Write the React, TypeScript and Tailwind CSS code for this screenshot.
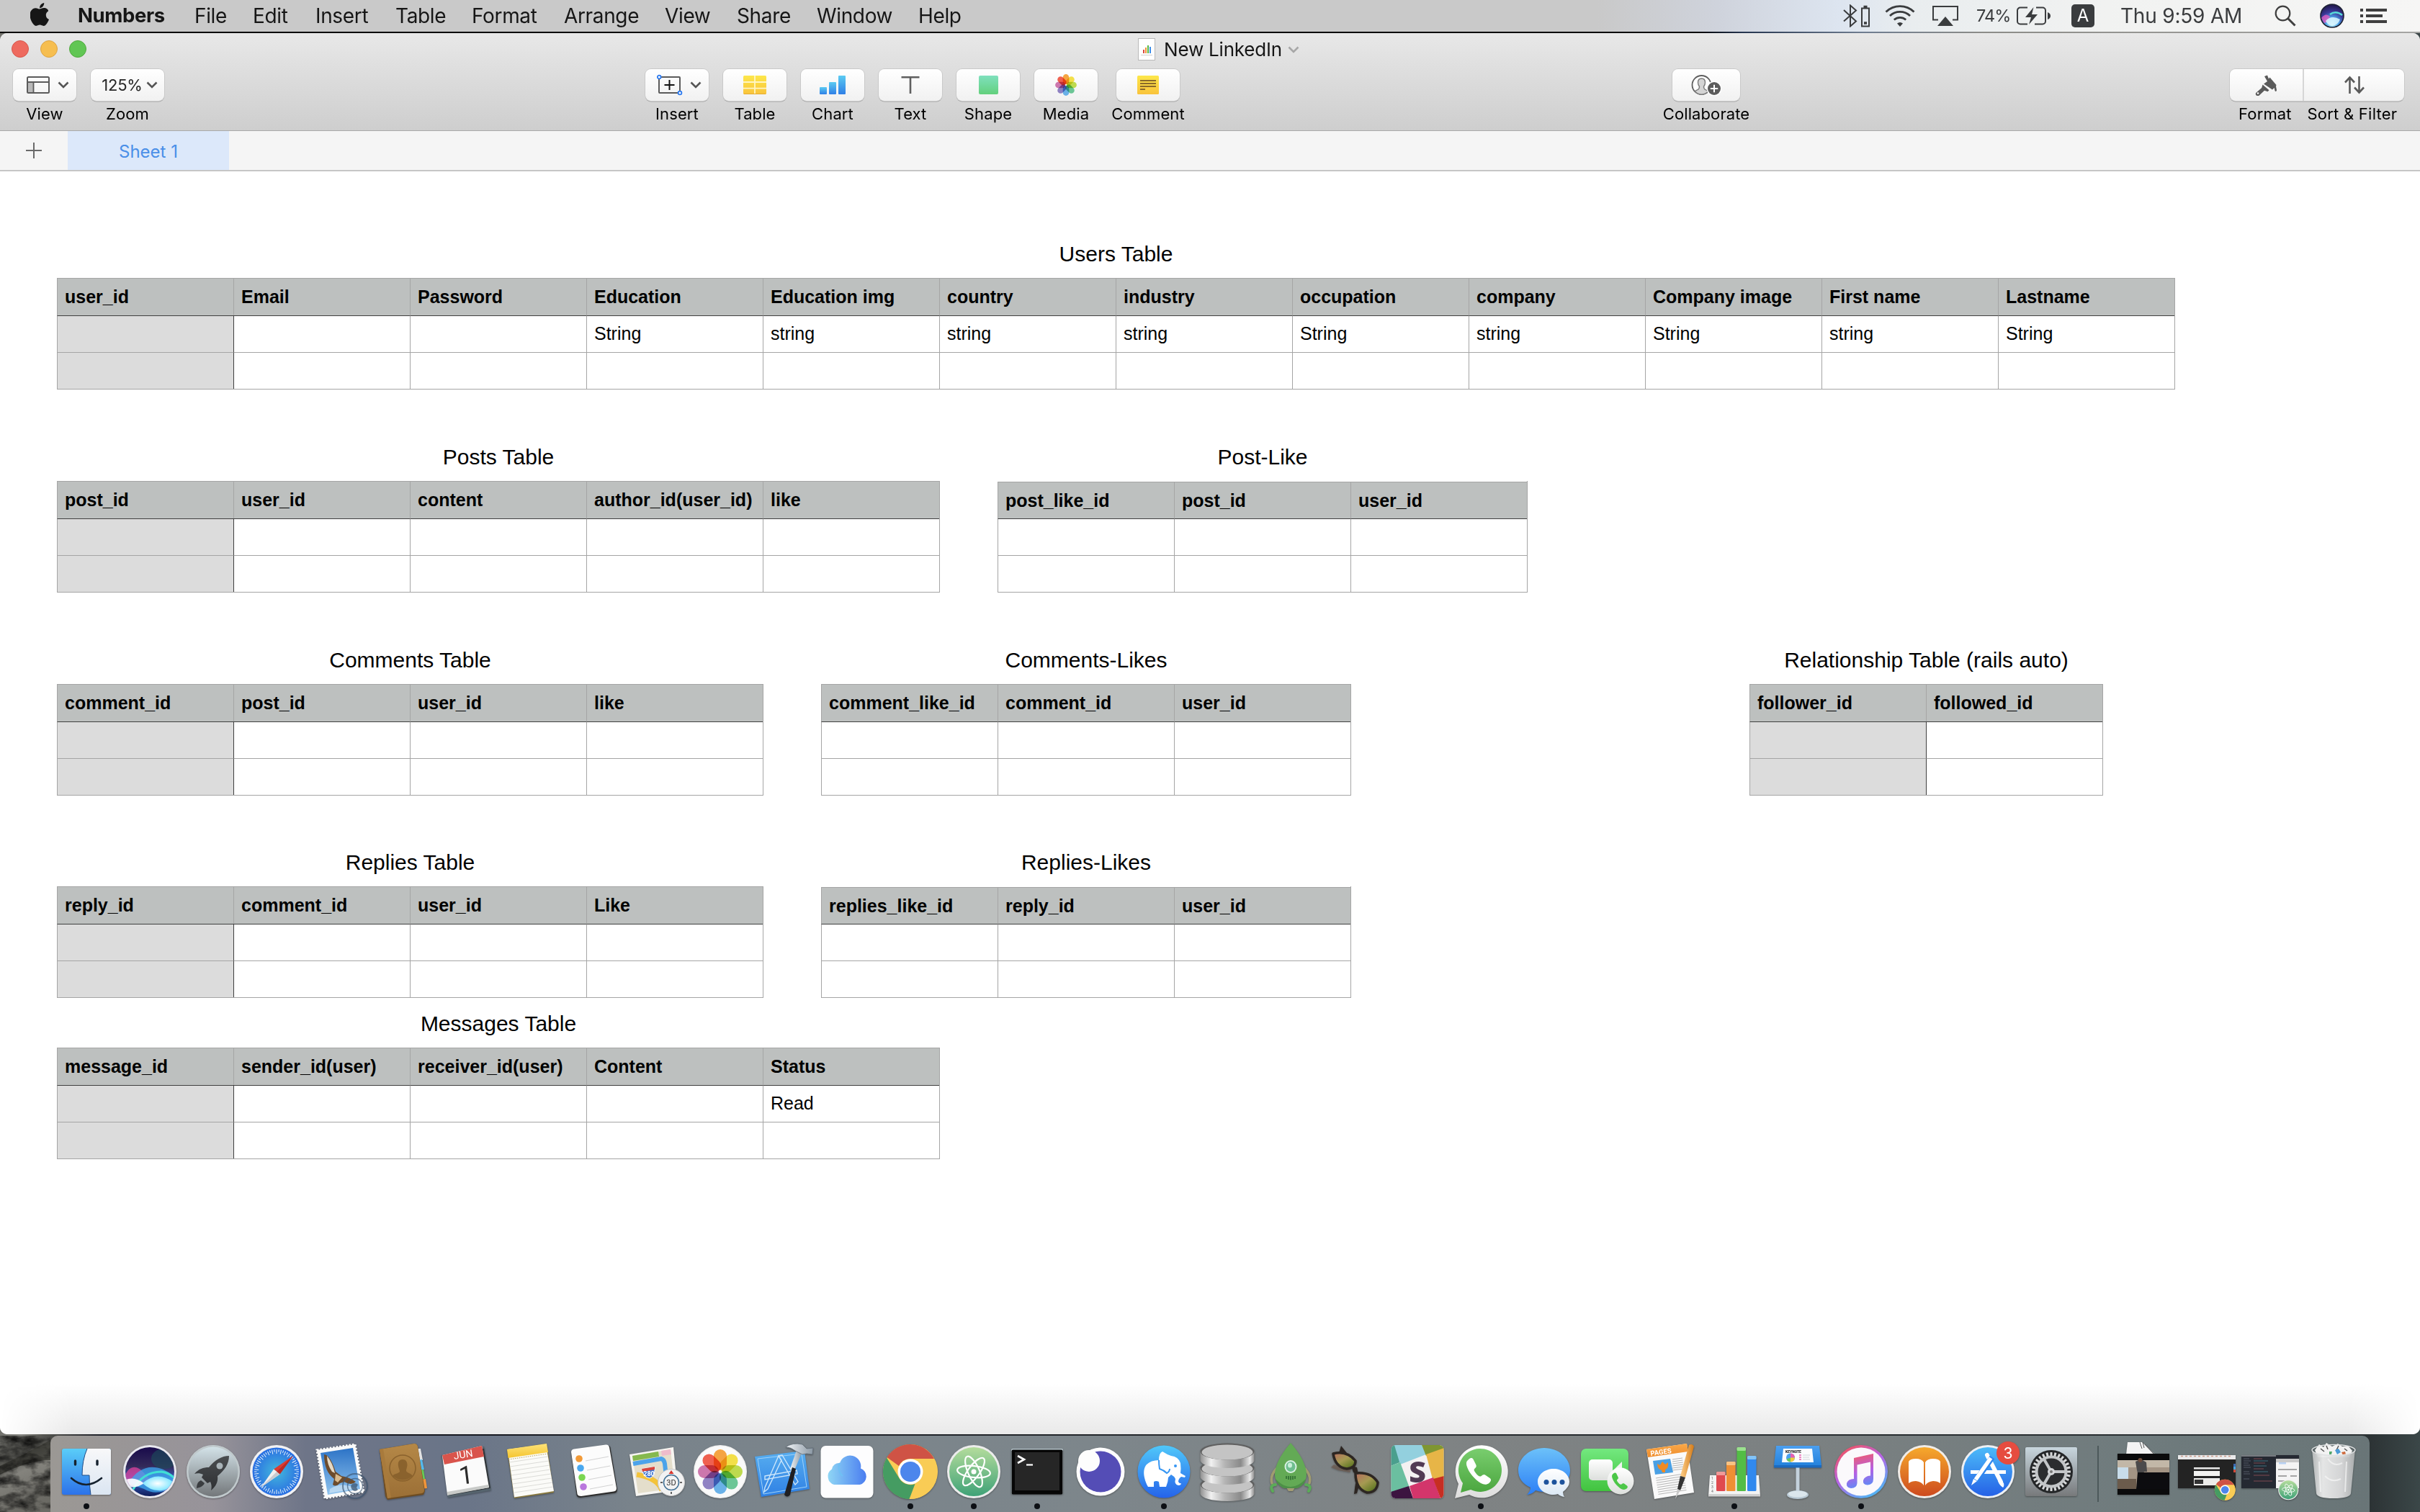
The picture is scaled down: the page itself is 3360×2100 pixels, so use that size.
import React from "react";

const menuItems = ["File", "Edit", "Insert", "Table", "Format", "Arrange", "View", "Share", "Window", "Help"];

type TableSpec = {
  title: string;
  columns: string[];
  firstRow?: Record<number, string>;
  headerColumn?: boolean;
  className?: string;
};

function SheetTable({ title, columns, firstRow = {}, headerColumn = true, className = "" }: TableSpec) {
  const rows = [0, 1];
  return (
    <section className={`flex flex-col items-center ${className}`}>
      <h2 className="mb-[16px] h-[34px] text-[30px] leading-[34px] whitespace-nowrap">{title}</h2>
      <div className="flex flex-col border-r border-b border-[#a5a5a5]">
        <div className="flex h-[52px] group-[.compact]:mt-px group-[.compact]:h-[51px]">
          {columns.map((c, i) => (
            <div
              key={i}
              className="h-full w-[245px] border-t border-l border-[#a5a5a5] bg-[#bdc0bf] pl-[10px] text-[25px] leading-[50px] font-bold whitespace-nowrap"
            >
              {c}
            </div>
          ))}
        </div>
        {rows.map((r) => (
          <div key={r} className="flex h-[51px]">
            {columns.map((_, i) => (
              <div
                key={i}
                className={[
                  "h-[51px] w-[245px] border-t border-l pl-[10px] text-[25px] leading-[49px] whitespace-nowrap",
                  r === 0 ? "border-t-[#3f3f3f]" : "border-t-[#a5a5a5]",
                  headerColumn && i === 1 ? "border-l-[#3f3f3f]" : "border-l-[#a5a5a5]",
                  headerColumn && i === 0 ? "bg-[#dcdcdc]" : "bg-white",
                ].join(" ")}
              >
                {r === 0 ? firstRow[i] : null}
              </div>
            ))}
          </div>
        ))}
      </div>
    </section>
  );
}

function Chevron({ color = "#555", className = "" }: { color?: string; className?: string }) {
  return (
    <svg width="16" height="10" viewBox="0 0 16 10" className={className}>
      <path d="M1.5 1.5 L8 8 L14.5 1.5" fill="none" stroke={color} strokeWidth="2.6" />
    </svg>
  );
}

const petals: [number, string][] = [
  [0, "#f49a2c"],
  [45, "#f2dc35"],
  [90, "#b7d63a"],
  [135, "#5cc08b"],
  [180, "#5aa9e6"],
  [225, "#8374bd"],
  [270, "#c768a4"],
  [315, "#ee4e3c"],
];

function Flower({ scale = 1, cx, cy }: { scale?: number; cx: number; cy: number }) {
  return (
    <g transform={`translate(${cx} ${cy}) scale(${scale})`} style={{ isolation: "isolate" }}>
      {petals.map(([a, c]) => (
        <rect
          key={a}
          x="-9"
          y="-31"
          width="18"
          height="29"
          rx="9"
          fill={c}
          opacity="0.9"
          transform={`rotate(${a})`}
          className="mix-blend-multiply"
        />
      ))}
    </g>
  );
}

function ToolButton({
  label,
  width,
  className = "",
  children,
}: {
  label: string;
  width: string;
  className?: string;
  children: React.ReactNode;
}) {
  return (
    <div className={`flex flex-col items-center ${width} ${className}`}>
      <div
        className={`flex h-[44px] items-center justify-center rounded-[8px] bg-linear-to-b from-white to-[#f1f1f1] shadow-[0_0_0_1px_#c9c9c9,0_1.5px_0_0_#9d9d9d] ${width}`}
      >
        {children}
      </div>
      <span className="mt-[6px] text-[22px] leading-[24px] tracking-[0.1px] whitespace-nowrap text-black">{label}</span>
    </div>
  );
}

const yellowFill = (id: string) => (
  <linearGradient id={id} x1="0" y1="0" x2="0" y2="1">
    <stop offset="0" stopColor="#fde74a" />
    <stop offset="1" stopColor="#f9c33c" />
  </linearGradient>
);

function Toolbar() {
  return (
    <div className="flex h-[88px] items-start">
      <ToolButton label="View" width="w-[88px]" className="ml-[18px]">
        <svg width="32" height="24" viewBox="0 0 32 24" className="ml-[9px]">
          <rect x="1" y="1" width="30" height="22" rx="1.5" fill="none" stroke="#5b5b5b" strokeWidth="2" />
          <rect x="2" y="8" width="7" height="14" fill="#b9b9b9" />
          <path d="M1 8H31M9.5 8V23" stroke="#5b5b5b" strokeWidth="1.8" />
        </svg>
        <Chevron className="ml-[11px]" />
      </ToolButton>
      <ToolButton label="Zoom" width="w-[102px]" className="ml-[20px]">
        <span className="ml-[6px] text-[22px] tracking-[-0.2px] text-[#262626]">125%</span>
        <Chevron className="ml-[5px]" />
      </ToolButton>

      <ToolButton label="Insert" width="w-[88px]" className="ml-[668px]">
        <svg width="36" height="30" viewBox="0 0 36 30">
          <rect x="3" y="4" width="29" height="22" rx="1" fill="none" stroke="#5b5b5b" strokeWidth="2" />
          <path d="M17.5 8V22M10.5 15H24.5" stroke="#111" strokeWidth="2" />
          <circle cx="3.2" cy="4" r="2.4" fill="#fff" stroke="#2d7bf0" strokeWidth="1.8" />
          <circle cx="32" cy="26" r="2.4" fill="#fff" stroke="#2d7bf0" strokeWidth="1.8" />
        </svg>
        <Chevron className="mr-[-6px] ml-[10px]" />
      </ToolButton>
      <ToolButton label="Table" width="w-[88px]" className="ml-[20px]">
        <svg width="32" height="26" viewBox="0 0 32 26">
          <defs>{yellowFill("tbY")}</defs>
          <rect width="32" height="26" rx="1.5" fill="url(#tbY)" />
          <path d="M0 9H32M0 17.7H32M16 0V26" stroke="#fff6c4" strokeWidth="1.8" />
          <path d="M1 25.5H31" stroke="#e4ac30" strokeWidth="1" />
        </svg>
      </ToolButton>
      <ToolButton label="Chart" width="w-[88px]" className="ml-[20px]">
        <svg width="36" height="26" viewBox="0 0 36 26">
          <defs>
            <linearGradient id="tbB" x1="0" y1="0" x2="0" y2="1">
              <stop offset="0" stopColor="#5bcbf2" />
              <stop offset="1" stopColor="#2f7fe6" />
            </linearGradient>
          </defs>
          <rect x="0" y="16" width="10" height="10" rx="1" fill="url(#tbB)" />
          <rect x="13" y="9" width="10" height="17" rx="1" fill="url(#tbB)" />
          <rect x="26" y="0" width="10" height="26" rx="1" fill="url(#tbB)" />
        </svg>
      </ToolButton>
      <ToolButton label="Text" width="w-[88px]" className="ml-[20px]">
        <svg width="26" height="26" viewBox="0 0 26 26">
          <path d="M0.5 2.3H25.5M13 2V25" stroke="#5f5f5f" strokeWidth="2.6" fill="none" />
        </svg>
      </ToolButton>
      <ToolButton label="Shape" width="w-[88px]" className="ml-[20px]">
        <div className="h-[26px] w-[27px] rounded-[2px] bg-linear-to-b from-[#7fe0bd] to-[#63d07c]" />
      </ToolButton>
      <ToolButton label="Media" width="w-[88px]" className="ml-[20px]">
        <svg width="32" height="32" viewBox="0 0 32 32">
          <Flower cx={16} cy={16} scale={0.48} />
        </svg>
      </ToolButton>
      <ToolButton label="Comment" width="w-[88px]" className="ml-[26px]">
        <svg width="30" height="26" viewBox="0 0 30 26">
          <defs>{yellowFill("tbC")}</defs>
          <rect width="30" height="26" rx="1.5" fill="url(#tbC)" />
          <path d="M4 7H26M4 11H26M4 15H26M4 19H11" stroke="#8a6a2a" strokeWidth="2" />
        </svg>
      </ToolButton>

      <ToolButton label="Collaborate" width="w-[94px]" className="ml-[684px]">
        <svg width="42" height="30" viewBox="0 0 42 30">
          <circle cx="14.5" cy="15" r="13" fill="#fff" stroke="#5f5f5f" strokeWidth="1.8" />
          <path
            d="M14.5 6c-3.6 0-5 2.7-5 5.7 0 2.6 1 4.300 2 5.600 0 2.700-.3 3.400-2.500 4.300-2 .8-2.800 1.200-3.600 2.400a12 12 0 0 0 18.200 0c-.8-1.200-1.600-1.600-3.600-2.400-2.200-.9-2.500-1.600-2.500-4.300 1-1.300 2-3 2-5.600 0-3-1.400-5.700-5-5.700z"
            fill="#d4d4d4"
            stroke="#7a7a7a"
            strokeWidth="1.4"
          />
          <circle cx="32" cy="20" r="10.500" fill="#fff" />
          <circle cx="32" cy="20" r="9" fill="#5b5b5b" />
          <path d="M32 14.800V25.200M26.800 20H37.200" stroke="#fff" strokeWidth="2" />
        </svg>
      </ToolButton>

      <div className="ml-[680px] flex w-[242px] flex-col">
        <div className="flex h-[44px] rounded-[8px] bg-linear-to-b from-white to-[#f1f1f1] shadow-[0_0_0_1px_#c9c9c9,0_1.5px_0_0_#9d9d9d]">
          <div className="flex w-[103px] items-center justify-center border-r-2 border-[#d6d6d6]">
            <svg width="32" height="30" viewBox="0 0 32 30">
              <path d="M13 3l4-1.500 2 5 1.500-2 9 10.500-.5 2 1 5c0 2.500-2.600 2.500-2.700 0l-.6-3-2.700 2.500L12 13.500l5-3.500z" fill="#5b5b5b" />
              <path d="M10.500 14.500l9 7.800-2 2-4.500-1.600-7.500 7c-3 1.600-5.800-1-4.300-3.700l8-7z" fill="#5b5b5b" />
              <circle cx="4" cy="26.500" r="1.300" fill="#fff" />
            </svg>
          </div>
          <div className="flex w-[139px] items-center justify-center">
            <svg width="30" height="26" viewBox="0 0 30 26" fill="none" stroke="#5b5b5b" strokeWidth="2.6">
              <path d="M8.500 25V2.500M2 9.500L8.500 2.500L15 9.500" />
              <path d="M21.500 1V23.500M15 16.500L21.500 23.500L28 16.500" />
            </svg>
          </div>
        </div>
        <div className="mt-[6px] flex text-[22px] leading-[24px] tracking-[0.15px] whitespace-nowrap text-black">
          <span className="w-[101px] text-center">Format</span>
          <span className="flex w-[149px] justify-center tracking-[0.25px]">Sort &amp; Filter</span>
        </div>
      </div>
    </div>
  );
}

function SiriOrb() {
  return (
    <svg width="34" height="34" viewBox="0 0 34 34">
      <defs>
        <radialGradient id="so" cx="0.5" cy="0.85" r="0.8">
          <stop offset="0" stopColor="#bff4ff" />
          <stop offset="0.35" stopColor="#4aa3e8" />
          <stop offset="0.65" stopColor="#3c3a9c" />
          <stop offset="1" stopColor="#231b52" />
        </radialGradient>
      </defs>
      <circle cx="17" cy="17" r="16" fill="url(#so)" stroke="#1d2233" strokeWidth="1.6" />
      <path d="M2 20q6-8 12-2q-2 8-8 9z" fill="#e15bc0" opacity="0.8" />
      <path d="M8 24q8-9 20-2q-3 8-11 9q-6-1-9-7z" fill="#dcf6ff" opacity="0.85" />
      <path d="M14 15q8-6 17 1" stroke="#57dcd8" strokeWidth="2.500" fill="none" />
    </svg>
  );
}

function MenuBar() {
  return (
    <div className="flex h-[44px] items-center bg-[linear-gradient(90deg,#c9c9c9_0%,#c9c9c9_66%,#cfd3dc_71%,#dde5f0_76%,#e9edef_79%,#f1f2f1_87%,#f6f6f5_100%)] text-[28px] text-[#161616]">
      <svg width="28" height="34" viewBox="0 0 28 34" className="mt-[-4px] ml-[42px] w-[28px] shrink-0">
        <path
          d="M19.200 1c.2 2-.6 3.800-1.700 5.100-1.200 1.400-2.900 2.300-4.400 2.200-.2-1.900.7-3.800 1.700-5C16 2 17.900 1.100 19.200 1zM25 12.400c-2 1.200-3.300 3.100-3.200 5.600 0 2.900 1.700 5 4.200 6-.6 1.700-1.400 3.300-2.500 4.900-1.400 2-2.800 4-5 4-2.100 0-2.800-1.300-5.200-1.300-2.400 0-3.200 1.300-5.200 1.300-2.100.1-3.700-2.100-5.100-4.100-2.800-4.100-5-11.500-2.100-16.500 1.400-2.500 4-4.100 6.700-4.100 2.100 0 4.100 1.400 5.400 1.400 1.300 0 3.700-1.700 6.300-1.500 1.100 0 4 .4 5.700 3.300z"
          fill="#161616"
        />
      </svg>
      <div className="ml-[38px] grid grid-cols-[162px_81px_87px_111px_106px_128px_140px_100px_111px_141px_80px] items-center whitespace-nowrap">
        <span className="text-[27.500px] font-bold tracking-[-0.400px]">Numbers</span>
        {menuItems.map((m) => (
          <span key={m} className="tracking-[-0.35px]">
            {m}
          </span>
        ))}
      </div>
      <div className="ml-auto flex items-center text-[#3a3c3e]">
        <svg width="38" height="32" viewBox="0 0 38 32" className="mr-[20px]" fill="none" stroke="#3a3c3e">
          <path d="M1 8L18 23.500L10 30.500V1.500L18 8.500L1 23.500" strokeWidth="2" />
          <rect x="26" y="5.500" width="10" height="25" strokeWidth="2" />
          <path d="M28.500 3.500h5M29 26h4" strokeWidth="3.600" />
        </svg>
        <svg width="42" height="32" viewBox="0 0 42 32" className="mr-[23px]" fill="none" stroke="#3a3c3e" strokeWidth="2.800">
          <path d="M1.500 10.500a28 28 0 0 1 39 0M7 16a20.500 20.500 0 0 1 28 0M12.800 21.500a12.500 12.500 0 0 1 16.400 0" />
          <path d="M17 26.500q4-3 8 0L21 31z" fill="#3a3c3e" stroke="none" />
        </svg>
        <svg width="38" height="30" viewBox="0 0 38 30" className="mr-[24px]">
          <path d="M9 20.500H2V2H36V20.500H29" fill="none" stroke="#3a3c3e" strokeWidth="2" />
          <path d="M19 16L30 29H8z" fill="#3a3c3e" />
        </svg>
        <span className="w-[56px] text-[23.500px] tracking-[-0.9px]">74%</span>
        <svg width="48" height="28" viewBox="0 0 48 28" className="mr-[28px]">
          <path d="M15 2.500H5a4 4 0 0 0-4 4v15a4 4 0 0 0 4 4h10M27 2.500h9a4 4 0 0 1 4 4v15a4 4 0 0 1-4 4H25" fill="none" stroke="#3a3c3e" strokeWidth="2" />
          <path d="M23.500 2L12 16h8l-3 10L29 12h-8z" fill="#3a3c3e" />
          <path d="M43 9q4 1.500 4 5t-4 5z" fill="#3a3c3e" />
        </svg>
        <span className="mr-[36px] flex h-[32px] w-[32px] items-center justify-center rounded-[5px] bg-[#3a3c3e] text-[24px] text-white">A</span>
        <span className="mr-[36px] w-[178px] text-[28px] tracking-[-0.2px] whitespace-nowrap">Thu 9:59 AM</span>
        <svg width="30" height="30" viewBox="0 0 30 30" className="mr-[33px]">
          <circle cx="11.500" cy="11.500" r="9.800" fill="none" stroke="#3f3f3f" strokeWidth="2.200" />
          <path d="M18.500 18.500L28.500 28.500" stroke="#3f3f3f" strokeWidth="3" />
        </svg>
        <span className="mr-[22px]">
          <SiriOrb />
        </span>
        <svg width="38" height="22" viewBox="0 0 38 22" className="mr-[45px]" stroke="#3f3f3f" strokeWidth="4">
          <path d="M0 3H4M8 3H37M0 11H4M8 11H31M0 19H4M8 19H37" />
        </svg>
      </div>
    </div>
  );
}

/* ---------- Dock icons, each drawn on an 88×88 tile ---------- */

function Grad({ id, from, to, h = false }: { id: string; from: string; to: string; h?: boolean }) {
  return (
    <linearGradient id={id} x1="0" y1="0" x2={h ? "1" : "0"} y2={h ? "0" : "1"}>
      <stop offset="0" stopColor={from} />
      <stop offset="1" stopColor={to} />
    </linearGradient>
  );
}

const PHONE =
  "M-11-13c2-2 4-2 5 0l3 6c1 2 0 3-1 4-2 1.500-1 3 1 5.500s4 4.500 6 3 3-2 4.500-1l5 3.500c2 1.500 1 4-1 5.500-4 3-9 1-14-3.500s-9-10-10.500-15 0-6 2-8z";

function ChromeLogo() {
  return (
    <g>
      <circle cx="44" cy="44" r="38" fill="#f9cc55" />
      <path d="M44 6A38 38 0 0 1 77 26H44a18 18 0 0 0-16 10L11.500 24A38 38 0 0 1 44 6z" fill="#cf5345" />
      <path d="M11.200 24.700L28.500 53a18 18 0 0 0 22 8L42.500 82A38 38 0 0 1 11.200 24.700z" fill="#459c62" />
      <path d="M44 26h33a38 38 0 0 1-34.500 56L59 54z" fill="#f9cc55" />
      <circle cx="44" cy="44" r="17.500" fill="#fff" />
      <circle cx="44" cy="44" r="14" fill="#4c86ec" />
    </g>
  );
}

function AtomLogo({ id }: { id: string }) {
  return (
    <g>
      <defs>
        <Grad id={id} from="#b4dc9c" to="#3fa277" />
      </defs>
      <circle cx="44" cy="44" r="37" fill="#ececec" />
      <circle cx="44" cy="44" r="34" fill={`url(#${id})`} />
      <g fill="none" stroke="#fff" strokeWidth="2.200">
        <ellipse cx="44" cy="44" rx="23" ry="8" transform="rotate(6 44 44)" />
        <ellipse cx="44" cy="44" rx="23" ry="8" transform="rotate(66 44 44)" />
        <ellipse cx="44" cy="44" rx="23" ry="8" transform="rotate(126 44 44)" />
      </g>
      <circle cx="44" cy="44" r="3.500" fill="#fff" />
    </g>
  );
}

const ticks = Array.from({ length: 60 }, (_, i) => i * 6);
const teeth = Array.from({ length: 28 }, (_, i) => (i * 360) / 28);

const dockIcons: { name: string; running?: boolean; art: React.ReactNode }[] = [
  {
    name: "finder",
    running: true,
    art: (
      <>
        <defs>
          <Grad id="f1" from="#5acdf8" to="#2c72ea" />
          <Grad id="f2" from="#f8f8f9" to="#dbe6f2" />
        </defs>
        <rect x="10" y="12" width="68" height="64" rx="3" fill="url(#f1)" />
        <path d="M45 12H75a3 3 0 0 1 3 3V73a3 3 0 0 1-3 3H50q-2-12-2-27H38Q38 28 45 12z" fill="url(#f2)" />
        <path d="M45 12Q38 28 38 49H48q0 15 2 27" fill="none" stroke="#1f4c86" strokeWidth="1" />
        <path d="M28.500 29v5M59 29v5" stroke="#16222e" strokeWidth="3.400" strokeLinecap="round" />
        <path d="M23 53q20 18 42 0" fill="none" stroke="#16222e" strokeWidth="2.600" strokeLinecap="round" />
      </>
    ),
  },
  {
    name: "siri",
    art: (
      <>
        <defs>
          <clipPath id="sc">
            <circle cx="44" cy="44" r="34" />
          </clipPath>
          <linearGradient id="s1" x1="0" y1="0" x2="0" y2="1">
            <stop offset="0" stopColor="#17084a" />
            <stop offset="0.400" stopColor="#332a5a" />
            <stop offset="0.650" stopColor="#3a63c8" />
            <stop offset="1" stopColor="#0b1650" />
          </linearGradient>
          <radialGradient id="s2">
            <stop offset="0" stopColor="#fff" />
            <stop offset="1" stopColor="#7fe6ff" />
          </radialGradient>
        </defs>
        <circle cx="44" cy="44" r="37" fill="#e9e9ef" />
        <g clipPath="url(#sc)">
          <rect x="8" y="8" width="72" height="72" fill="url(#s1)" />
          <ellipse cx="64" cy="26" rx="18" ry="14" fill="#1d4f5b" opacity="0.600" />
          <path d="M8 54C14 34 26 34 36 46S64 72 80 56L80 66Q60 76 44 66T8 66z" fill="#e9429c" opacity="0.700" />
          <path d="M14 60C30 34 54 30 80 52V62Q56 80 36 68z" fill="#3da9f2" opacity="0.750" />
          <path d="M20 70Q34 44 60 44Q74 46 82 58" stroke="#3fe0d4" strokeWidth="3" fill="none" />
          <path d="M6 58Q20 48 36 60Q22 70 6 62z" fill="#fff" opacity="0.900" />
          <path d="M34 60Q54 42 76 58Q70 72 56 70Q44 70 34 60z" fill="url(#s2)" />
        </g>
      </>
    ),
  },
  {
    name: "launchpad",
    art: (
      <>
        <defs>
          <Grad id="l1" from="#d3e2e8" to="#73777a" />
          <Grad id="l2" from="#4a4d50" to="#2e3033" />
        </defs>
        <circle cx="44" cy="44" r="37" fill="#e1edf1" />
        <circle cx="44" cy="44" r="37" fill="#9a9d9f" opacity="0.450" />
        <circle cx="44" cy="44" r="34.500" fill="url(#l1)" />
        <path
          d="M66 22C56 22 46 28 38 38C30 38 24 40 18 47C22 46 26 46 30 48L28 52L36 60L40 58C42 62 42 66 41 70C48 64 51 58 50 50C60 42 66 33 66 22z"
          fill="url(#l2)"
        />
        <circle cx="53" cy="36" r="4.500" fill="#a9b3b8" />
        <path d="M27 56C22 58 21 63 21 67C26 66 30 64 32 60z" fill="#3a3d40" />
      </>
    ),
  },
  {
    name: "safari",
    art: (
      <>
        <defs>
          <radialGradient id="sf">
            <stop offset="0" stopColor="#43b8dc" />
            <stop offset="1" stopColor="#2a6fe2" />
          </radialGradient>
        </defs>
        <circle cx="44" cy="44" r="37" fill="#f1f1f3" />
        <circle cx="44" cy="44" r="33.500" fill="url(#sf)" />
        {ticks.map((t, i) => (
          <path
            key={t}
            d={i % 2 ? "M44 13V16.500" : "M44 13V19"}
            stroke="#e6f3fb"
            strokeWidth="1"
            transform={`rotate(${t} 44 44)`}
          />
        ))}
        <path d="M67 22L48.500 47.500L40 40.500z" fill="#dc3b33" />
        <path d="M22 66L40 40.500L48.500 47.500z" fill="#f2f0ef" />
        <path d="M67 22L44.200 44L48.500 47.500z" fill="#b92b26" />
        <path d="M22 66L44.200 44L48.500 47.500z" fill="#c9cbd0" />
      </>
    ),
  },
  {
    name: "mail",
    art: (
      <>
        <defs>
          <Grad id="m1" from="#2c73c6" to="#8fc3ee" />
        </defs>
        <g>
          <path d="M12 14L65 6L77 72L23 81z" fill="#fafafa" stroke="#fafafa" strokeWidth="3" strokeDasharray="2.500 2" />
          <path d="M17 18L62 11L72 68L27 76z" fill="url(#m1)" />
          <path d="M22 20Q30 20 38 44L46 50Q58 52 66 58Q60 64 50 58L44 60Q38 66 34 62L36 54Q22 44 22 20z" fill="#6d4c2d" />
          <path d="M26 22Q34 32 37 46L33 44Q26 34 26 22z" fill="#e4d8c4" />
          <path d="M38 47L47 52L41 59L37 56z" fill="#d8b98c" />
          <path d="M30 68Q44 58 64 66L70 67L29 74z" fill="#cfe4f5" opacity="0.700" />
        </g>
        <g fill="none" stroke="#3c5571" opacity="0.650">
          <circle cx="65" cy="64" r="17" strokeWidth="2" />
          <circle cx="65" cy="64" r="10.500" strokeWidth="1.400" />
        </g>
        <path d="M60 62q5-4 9 0l-2 4 2 3q-4 4-8 0q-3-4-1-7z" fill="#3c5571" opacity="0.750" />
      </>
    ),
  },
  {
    name: "contacts",
    art: (
      <>
        <defs>
          <Grad id="c1" from="#b58847" to="#9b6f36" />
        </defs>
        <path d="M62 12L68 12L71 28L65 28z" fill="#e2e2e2" />
        <path d="M64 28L70 27L73 41L66 42z" fill="#55b9ec" />
        <path d="M65 42L72 41L74 54L67 55z" fill="#67cc55" />
        <path d="M67 55L75 54L77 67L69 68z" fill="#f0953a" />
        <path d="M11 13L59 5Q63 5 64 9L74 71L72 76L22 83L19 78z" fill="#6f4d22" />
        <path d="M11 13L59 5Q63 5 64 9L73 69Q73 73 70 74L22 81z" fill="url(#c1)" />
        <path d="M11 13L16 12L27 80L22 81z" fill="#a87a3c" />
        <circle cx="43" cy="39" r="18" fill="none" stroke="#8a622d" strokeWidth="1.600" />
        <path d="M43 27c-5 0-7 4-6 9 .500 4 2 5 2 8-2 3-9 3-10 6q14 11 28 0c-2-4-8-4-9-7 0-3 1-4 1.500-8 0-5-2-8-6.500-8z" fill="#8a622d" />
      </>
    ),
  },
  {
    name: "calendar",
    art: (
      <>
        <path d="M9 21L68 9L78 70L18 80z" fill="#56646e" />
        <path d="M12 24L68 12L77 67L19 77z" fill="#2f3438" />
        <path d="M10 21L65 8L75 66L17 76z" fill="#fbfbfb" />
        <path d="M17 72L74 62L75 66L17 77z" fill="#c8cac8" />
        <path d="M10 21L65 8L68 23L13 34z" fill="#d9544c" />
        <text x="39" y="25" fontSize="14" textAnchor="middle" fill="#fff" transform="rotate(-9 39 20)" fontFamily="Roboto, sans-serif">
          JUN
        </text>
        <text x="43" y="61" fontSize="35" textAnchor="middle" fill="#2b2b2b" transform="rotate(-7 43 48)" fontFamily="Roboto, sans-serif">
          1
        </text>
      </>
    ),
  },
  {
    name: "notes",
    art: (
      <>
        <defs>
          <Grad id="n1" from="#fde27a" to="#f5c52e" />
        </defs>
        <path d="M12 13L67 5L77 73L22 81z" fill="#8a7a3f" />
        <path d="M13 13L66 6L77 71L22 79.500z" fill="#fbfbf8" />
        <path d="M12 13L67 5L69 17L13.500 25z" fill="url(#n1)" />
        {[0, 1, 2, 3, 4, 5, 6, 7].map((i) => (
          <path key={i} d={`M${15 + i} ${31 + i * 6}L${69 + i} ${23 + i * 6}`} stroke="#dcdcd8" strokeWidth="1" />
        ))}
        <path d="M14 27L69 19" stroke="#b9a45a" strokeWidth="1" strokeDasharray="1.500 1.500" />
      </>
    ),
  },
  {
    name: "reminders",
    art: (
      <>
        <path d="M13 17L62 8Q67 7 67.500 11L77 68Q77 73 74 73.500L26 80Q21 80 20.500 76z" fill="#2c2c2c" />
        <path d="M13 17Q13 13 17 12.500L61 6.500Q65 6 66 10L76 67Q76 71 72 71.500L27 78Q22 78 21.500 75z" fill="#fcfcfc" />
        {[
          ["#f29a37", 24, 26],
          ["#49a8ef", 26, 39],
          ["#7ad651", 28, 52],
          ["#b978dd", 30, 65],
        ].map(([c, x, y]) => (
          <g key={String(c)}>
            <circle cx={x} cy={y} r="4.800" fill={String(c)} />
            <path d={`M${Number(x) + 9} ${Number(y) + 3}L${Number(x) + 41} ${Number(y) - 3}`} stroke="#d3d3d3" strokeWidth="1.200" />
          </g>
        ))}
      </>
    ),
  },
  {
    name: "maps",
    art: (
      <>
        <path d="M6 20L67 10L73 70L15 78z" fill="#f6f5f1" />
        <path d="M10 22L63 13L69 67L18 74z" fill="#e4decb" />
        <path d="M10 22L46 16L47 23L11 29z" fill="#85b94e" />
        <path d="M50 15L63 13L64 20L51 22z" fill="#efbccb" />
        <path d="M11 33L50 26Q54 27 55 33L58 60" fill="none" stroke="#4ba3ea" strokeWidth="6" />
        <path d="M16 48Q40 52 48 64L51 70" fill="none" stroke="#f3c33b" strokeWidth="7" />
        <path d="M23 40l18-3q1 14-7 16-9-1-11-13z" fill="#3c73cf" stroke="#fff" strokeWidth="1" />
        <path d="M23 40l18-3v4l-17 3z" fill="#d8453c" />
        <text x="33" y="50" fontSize="9" fontWeight="bold" fill="#fff" textAnchor="middle" fontFamily="Roboto, sans-serif">
          280
        </text>
        <circle cx="64" cy="59" r="18.500" fill="#f2f2f2" stroke="#c7c7c7" strokeWidth="1" />
        <circle cx="64" cy="59" r="10.500" fill="none" stroke="#3e6f94" strokeWidth="1.500" />
        <path d="M64 42l3.500 5h-7z" fill="#d8352c" />
        <path d="M49 59h3M76 59h3M64 72v3" stroke="#333" strokeWidth="1.500" />
        <text x="64" y="63" fontSize="11" fill="#333" textAnchor="middle" fontFamily="Roboto, sans-serif">
          3D
        </text>
      </>
    ),
  },
  {
    name: "photos",
    art: (
      <>
        <circle cx="44" cy="44" r="37" fill="#f0f0f0" />
        <circle cx="44" cy="44" r="35.500" fill="#fafafa" />
        <Flower cx={44} cy={44} scale={1} />
      </>
    ),
  },
  {
    name: "xcode",
    art: (
      <>
        <defs>
          <Grad id="x1" from="#57aef0" to="#2f80e4" />
          <Grad id="x2" from="#f2f5f8" to="#8a97a3" h />
        </defs>
        <path d="M4 23L73 15L80 68L13 79z" fill="url(#x1)" />
        <path d="M8 26L69 19L76 65L16 75z" fill="none" stroke="#9fd2f8" strokeWidth="1" />
        <g fill="none" stroke="#cbe6fb" strokeWidth="1.400">
          <path d="M37 22L18 66L17 72L22 68L41 28z" />
          <path d="M37 22L60 62L64 58L42 21z" />
          <path d="M18 50L62 42L63 47L18 55z" />
        </g>
        <path d="M62 14L70 16L59 42L53 40z" fill="url(#x2)" />
        <path d="M56 38L61 40L53 76Q49 81 45 76z" fill="#1f1f22" />
        <path d="M47 10Q56 3 70 6L76 12L85 11L84 20L76 19L70 20L60 15Q54 10 47 10z" fill="url(#x2)" stroke="#5f6b75" strokeWidth="0.800" />
      </>
    ),
  },
  {
    name: "icloud",
    art: (
      <>
        <defs>
          <Grad id="i1" from="#8fd6f5" to="#4a7df0" h />
        </defs>
        <rect x="7.500" y="8" width="73" height="72.500" rx="7" fill="#fdfdfe" />
        <path
          d="M26 62a12 12 0 0 1-3-21.500A10 10 0 0 1 34 32a15 15 0 0 1 29 7.500A11.800 11.800 0 0 1 62 62z"
          fill="url(#i1)"
        />
        <path d="M34 32a15 15 0 0 0 4 18" fill="none" stroke="#6fc0f4" strokeWidth="2" />
      </>
    ),
  },
  { name: "chrome", running: true, art: <ChromeLogo /> },
  { name: "atom", running: true, art: <AtomLogo id="at1" /> },
  {
    name: "terminal",
    running: true,
    art: (
      <>
        <rect x="8" y="12" width="72" height="63" rx="2" fill="#b8c6cc" />
        <rect x="8.500" y="13.500" width="71" height="62" rx="2" fill="#060606" />
        <rect x="13" y="17" width="62" height="53" fill="#262626" />
        <path d="M17 22l9 5-9 5" fill="none" stroke="#fff" strokeWidth="2.600" />
        <path d="M29 34.500h9" stroke="#fff" strokeWidth="2.200" />
      </>
    ),
  },
  {
    name: "eclipse",
    art: (
      <>
        <circle cx="44" cy="44" r="33.500" fill="#fdfdfd" />
        <circle cx="44" cy="44" r="28.500" fill="#544db6" />
        <circle cx="28" cy="29" r="15" fill="#fdfdfd" />
      </>
    ),
  },
  {
    name: "elephant",
    running: true,
    art: (
      <>
        <defs>
          <Grad id="e1" from="#50c8fa" to="#2563ea" />
        </defs>
        <circle cx="44" cy="44" r="36.500" fill="url(#e1)" />
        <path
          d="M22 65C17 56 13 42 20 34Q26 28 37 28Q37 18 42 16Q48 20 54 22Q64 23 67 32Q68 40 67 46L74 50L73 52L68 51Q64 54 64 58Q66 61 68 60Q68 63 64 63Q58 62 60 54Q58 50 54 48L50 52Q50 58 47 65H38L37 58Q33 56 30 58V65z"
          fill="#fff"
        />
        <path d="M37 28Q37 34 38 40Q44 42 48 46Q52 44 52 40" fill="none" stroke="#3796f3" strokeWidth="2" />
        <circle cx="60" cy="36" r="2" fill="#3796f3" />
      </>
    ),
  },
  {
    name: "database",
    art: (
      <>
        <defs>
          <linearGradient id="d1" x1="0" y1="0" x2="1" y2="0">
            <stop offset="0" stopColor="#8f8f8f" />
            <stop offset="0.200" stopColor="#f1f1f1" />
            <stop offset="0.450" stopColor="#b5b5b5" />
            <stop offset="0.750" stopColor="#8a8a8a" />
            <stop offset="0.920" stopColor="#e8e8e8" />
            <stop offset="1" stopColor="#8d8d8d" />
          </linearGradient>
        </defs>
        {[62, 39, 16].map((y) => (
          <g key={y}>
            <path d={`M6.500 ${y}V${y + 13}Q10 ${y + 22} 44 ${y + 23}Q78 ${y + 22} 81.500 ${y + 13}V${y}z`} fill="url(#d1)" />
            <ellipse cx="44" cy={y} rx="37.500" ry="11.500" fill="#5f5f5f" />
            <ellipse cx="44" cy={y + 1} rx="35.500" ry="10.500" fill="#c4c4c4" />
          </g>
        ))}
      </>
    ),
  },
  {
    name: "rocket",
    art: (
      <>
        <g fill="none" strokeLinecap="round">
          <path d="M24 40Q15 50 18 60M64 40Q73 50 70 60" stroke="#a09c70" strokeWidth="3.500" />
          <path d="M23 62Q14 63 19 71M65 62Q74 63 69 71" stroke="#5bab58" strokeWidth="4" />
        </g>
        <path d="M38 66h12l-3 5h-6z" fill="#a39c74" />
        <path d="M44 4C58 20 66 36 66 48C66 58 58 66 52 67H36C30 66 22 58 22 48C22 36 30 20 44 4z" fill="#63aa55" />
        <path d="M23 54Q44 76 65 54Q62 64 52 67H36Q26 64 23 54z" fill="#4d9047" />
        <ellipse cx="44" cy="37" rx="8.500" ry="9" fill="#d9f0e2" />
        <ellipse cx="44" cy="37" rx="6.500" ry="7" fill="#6fbe8f" />
        <ellipse cx="43" cy="35" rx="3" ry="3.500" fill="#c9efd8" />
        <path d="M38 50v4M41 50v5M44 50v5.500M47 50v5M50 50v4" stroke="#2f6b32" strokeWidth="1.600" />
      </>
    ),
  },
  {
    name: "sunglasses",
    art: (
      <>
        <defs>
          <linearGradient id="g1" x1="0.100" y1="0" x2="0.900" y2="1">
            <stop offset="0" stopColor="#b5705f" />
            <stop offset="0.450" stopColor="#a59a52" />
            <stop offset="0.800" stopColor="#6d7f2c" />
            <stop offset="1" stopColor="#3d4a1c" />
          </linearGradient>
        </defs>
        <path d="M12 38L16 34L26 38L40 42L38 45L22 42z" fill="#6f5b50" opacity="0.700" />
        <g fill="url(#g1)" stroke="#2d2622" strokeWidth="3.500" strokeLinejoin="round">
          <path d="M15 19Q34 14 46 29Q46 39 34 40Q18 38 15 19z" />
          <path d="M46 46Q68 44 77 59Q76 73 62 73Q46 68 46 46z" />
        </g>
        <path d="M23 18L26 8L34 18zM40 36L48 38L50 48L43 45z" fill="#2d2622" />
        <path d="M46 60L51 63L48 74L44 75z" fill="#2d2622" />
      </>
    ),
  },
  {
    name: "slack",
    art: (
      <>
        <defs>
          <clipPath id="skc">
            <rect x="7.500" y="7" width="73" height="74" rx="6" />
          </clipPath>
        </defs>
        <g clipPath="url(#skc)">
          <rect x="7" y="7" width="74" height="74" fill="#f4f1f2" />
          <path d="M7 7H16L22 30L7 36z" fill="#4a9f8d" />
          <path d="M12 7H50L56 20L20 34z" fill="#93d0de" />
          <path d="M50 7H81V14L56 22z" fill="#7f9632" />
          <path d="M56 20L81 11V52L66 58z" fill="#e7b547" />
          <path d="M7 36L20 31L34 69L7 76z" fill="#6bbfa0" />
          <path d="M7 72L32 64L38 81H7z" fill="#3c1440" />
          <path d="M33 64L66 52L76 81H38z" fill="#d3356b" />
          <path d="M66 54L81 50V81H76z" fill="#c72e22" />
        </g>
        <text x="44" y="59" fontSize="41" fontWeight="800" textAnchor="middle" fill="#523a54" fontFamily="'Open Sans', sans-serif">
          S
        </text>
      </>
    ),
  },
  {
    name: "whatsapp",
    running: true,
    art: (
      <>
        <defs>
          <Grad id="w1" from="#79cd6e" to="#4ba63f" />
          <Grad id="w2" from="#ffffff" to="#dddddd" />
        </defs>
        <path d="M8 81L13 61A36.500 36.500 0 1 1 28 76z" fill="url(#w2)" />
        <path d="M16 73L19 60A30 30 0 1 1 30 69z" fill="url(#w1)" />
        <path d={PHONE} fill="#fff" transform="translate(41 43) scale(1.250)" />
      </>
    ),
  },
  {
    name: "messages",
    art: (
      <>
        <defs>
          <Grad id="ms1" from="#6cc1f9" to="#2c7ff6" />
          <Grad id="ms2" from="#ffffff" to="#d9e7f4" />
        </defs>
        <path d="M44 11C64 11 80 25 80 42S64 72 44 72Q37 72 32 70Q28 75 20 76Q25 71 25 66Q8 58 8 42C8 25 24 11 44 11z" fill="url(#ms1)" />
        <path d="M57 40C69 40 79 48 79 58Q79 65 70 72Q70 76 72 79Q66 78 63 75Q60 76 57 76C45 76 35 68 35 58S45 40 57 40z" fill="url(#ms2)" />
        <circle cx="47" cy="58.500" r="3.500" fill="#1d539c" />
        <circle cx="58" cy="58.500" r="3.500" fill="#1d539c" />
        <circle cx="69" cy="58.500" r="3.500" fill="#1d539c" />
      </>
    ),
  },
  {
    name: "facetime",
    art: (
      <>
        <defs>
          <Grad id="ft1" from="#73e87f" to="#42c33f" />
          <Grad id="ft2" from="#ffffff" to="#dcdfdc" />
        </defs>
        <rect x="7" y="12" width="66" height="59" rx="7" fill="url(#ft1)" />
        <rect x="18" y="27" width="33" height="29" rx="5" fill="url(#ft2)" />
        <path d="M52 42L64 30V54z" fill="#f1f3f1" />
        <circle cx="62" cy="57" r="18.500" fill="url(#ft2)" />
        <path d={PHONE} fill="#4cc748" transform="translate(61 57) scale(0.800)" />
      </>
    ),
  },
  {
    name: "pages",
    art: (
      <>
        <defs>
          <Grad id="p1" from="#f9a94a" to="#ef8c2b" />
          <Grad id="p2" from="#ffd08a" to="#d27a18" h />
        </defs>
        <path d="M10 13L66 5L76 73L21 82z" fill="#fafafa" />
        <path d="M10 13L66 5L68 16L12 24z" fill="url(#p1)" />
        <text x="16" y="22" fontSize="9.500" fontWeight="bold" fill="#fff" transform="rotate(-8 16 22)" fontFamily="Roboto, sans-serif">
          PAGES
        </text>
        <path d="M19 29L43 26L47 45L22 48z" fill="#4aa0e4" />
        <path d="M25 33l4 2 3-5 4 4 4-3q1 9-4 10l0 4-4 0-1-3q-6-2-6-9z" fill="#f08a22" />
        {[0, 1, 2, 3, 4, 5].map((i) => (
          <path key={i} d={`M46 ${27 + i * 3}L${60 + i * 0.4} ${25 + i * 3}`} stroke="#b5b5b5" strokeWidth="1" />
        ))}
        {[0, 1, 2, 3, 4, 5, 6, 7].map((i) => (
          <path key={i} d={`M${23 + i * 0.5} ${53 + i * 3.2}L${62 + i * 0.5} ${47 + i * 3.2}`} stroke="#b5b5b5" strokeWidth="1" />
        ))}
        <path d="M69 7Q74 4 76 9L64 52L57 50z" fill="url(#p2)" />
        <path d="M57 50L64 52L57 70L53 68z" fill="#333" />
        <path d="M53 68L57 70L50 82z" fill="#c9c9c9" />
      </>
    ),
  },
  {
    name: "numbers",
    running: true,
    art: (
      <>
        <path d="M10 49H78L80 78H8z" fill="#f3f3f3" />
        <path d="M8 75H80V78.500H8z" fill="#d1d1d1" />
        {[
          ["#e04a4f", "#f09a98", 19, 44],
          ["#ef8f34", "#f8c384", 33, 30],
          ["#53bd46", "#9be08f", 47.5, 10],
          ["#3189ee", "#83c3f7", 62, 22],
        ].map(([c, t, x, y]) => (
          <g key={String(c)}>
            <rect x={x} y={y} width="12.500" height={71 - Number(y)} rx="1.500" fill={String(c)} />
            <rect x={x} y={y} width="12.500" height="5" rx="1.500" fill={String(t)} />
          </g>
        ))}
        <g fontSize="5" fill="#666" fontFamily="Roboto, sans-serif">
          <text x="12" y="55">1</text>
          <text x="12" y="61">2</text>
          <text x="12" y="67">3</text>
          <text x="12" y="73">4</text>
        </g>
      </>
    ),
  },
  {
    name: "keynote",
    art: (
      <>
        <defs>
          <Grad id="k1" from="#4b9ff0" to="#2583dd" />
        </defs>
        <rect x="41.500" y="36" width="5" height="38" fill="#c3d1dc" />
        <ellipse cx="44" cy="76" rx="15" ry="6" fill="#b9c9d4" />
        <ellipse cx="44" cy="75" rx="13" ry="4.500" fill="#dbe6ec" />
        <path d="M14 8H74L77 35H11z" fill="url(#k1)" />
        <path d="M11 35H77V38.500H11z" fill="#1c6abf" />
        <path d="M24 12H64L66 31H22z" fill="#fbfcfd" />
        <text x="27" y="17.500" fontSize="5" fontWeight="900" fill="#222" fontFamily="Roboto, sans-serif">
          KEYNOTE
        </text>
        <circle cx="34" cy="24.500" r="6" fill="#4b9ff0" />
        <path d="M34 24.500V18.500A6 6 0 0 1 40 24.500z" fill="#e85fb0" />
        <path d="M34 24.500H40A6 6 0 0 1 34 30.500z" fill="#f2cb3f" />
        <path d="M34 24.500V30.500A6 6 0 0 1 28.500 26.500z" fill="#6cc85b" />
        <path d="M46 21h3M46 24h3M46 27h3" stroke="#e85fb0" strokeWidth="1.500" />
        <path d="M51 21h10M51 24h9M51 27h10" stroke="#cfd6dc" strokeWidth="1.200" />
      </>
    ),
  },
  {
    name: "itunes",
    running: true,
    art: (
      <>
        <defs>
          <linearGradient id="it1" x1="0.200" y1="0" x2="0.800" y2="1">
            <stop offset="0" stopColor="#f4525c" />
            <stop offset="0.450" stopColor="#b764e6" />
            <stop offset="1" stopColor="#43bff6" />
          </linearGradient>
          <linearGradient id="it2" x1="0.300" y1="0" x2="0.500" y2="1">
            <stop offset="0" stopColor="#f35b6a" />
            <stop offset="0.550" stopColor="#b460e4" />
            <stop offset="1" stopColor="#5e8cf6" />
          </linearGradient>
        </defs>
        <circle cx="44" cy="44" r="37" fill="url(#it1)" />
        <circle cx="44" cy="44" r="33.500" fill="#fbf9fc" />
        <path
          d="M34 25L61 19V54Q61 62 53 62.500Q46 62 47 56Q49 50 57 49.500V30.500L38.500 34.500V60Q38 67 30 67Q23 66 24 60Q26 54 34 54z"
          fill="url(#it2)"
        />
      </>
    ),
  },
  {
    name: "ibooks",
    art: (
      <>
        <defs>
          <Grad id="ib1" from="#f6a92c" to="#cd4a1e" />
        </defs>
        <circle cx="44" cy="44" r="37" fill="#f0ece8" />
        <circle cx="44" cy="44" r="34" fill="url(#ib1)" />
        <path d="M43 31Q40 26 32 26Q24 26 22 30V60Q26 57 32 57Q40 58 43 63z" fill="#fff" />
        <path d="M45 31Q48 26 56 26Q64 26 66 30V60Q62 57 56 57Q48 58 45 63z" fill="#fff" />
      </>
    ),
  },
  {
    name: "app-store",
    art: (
      <>
        <defs>
          <Grad id="as1" from="#4cbbf9" to="#2561e6" />
        </defs>
        <circle cx="44" cy="44" r="37" fill="#eef0f3" />
        <circle cx="44" cy="44" r="34" fill="url(#as1)" />
        <g stroke="#fff" fill="none">
          <path d="M20 44.500H69" strokeWidth="5" />
          <path d="M43 21L62 58" strokeWidth="6" strokeLinecap="round" />
          <path d="M50 24L27 57" stroke="#2f86ef" strokeWidth="8" />
          <path d="M48 25L27 55" strokeWidth="5.500" />
        </g>
        <path d="M24 54L29 57L21 63z" fill="#fff" />
        <path d="M60 52L66 60Q67 64 65 66Q60 63 58 57z" fill="#fff" />
        <circle cx="72" cy="18" r="16" fill="#e64c3f" />
        <text x="72" y="25.500" fontSize="21" textAnchor="middle" fill="#fff" fontFamily="Inter, sans-serif">
          3
        </text>
      </>
    ),
  },
  {
    name: "preferences",
    art: (
      <>
        <defs>
          <Grad id="sp1" from="#c8d6de" to="#77797b" />
        </defs>
        <rect x="8" y="10" width="72" height="68" rx="2" fill="url(#sp1)" />
        <circle cx="44" cy="44" r="30" fill="#242628" />
        {teeth.map((t) => (
          <rect key={t} x="42.500" y="17" width="3" height="6" fill="#d7d9da" transform={`rotate(${t} 44 44)`} />
        ))}
        <circle cx="44" cy="44" r="20.500" fill="#2b2d2f" stroke="#c3c6c8" strokeWidth="4" />
        <g stroke="#c3c6c8" strokeWidth="4">
          <path d="M44 44H64M44 44L34 26.700M44 44L34 61.300" />
        </g>
        <circle cx="44" cy="44" r="5" fill="#d4d6d8" />
        <circle cx="44" cy="44" r="2" fill="#777" />
      </>
    ),
  },
];

const minimized: React.ReactNode[] = [
  <>
    <path d="M22 3H42L60 20H20z" fill="#f4f4f4" />
    <path d="M39 3l3 9M43 3l2 8M46 6l12 13" stroke="#555" strokeWidth="1" />
    <rect x="8" y="19" width="72" height="57" fill="#0b0b0c" />
    <rect x="8" y="28" width="72" height="40" fill="#a39484" />
    <rect x="8" y="28" width="72" height="10" fill="#c2b7a7" />
    <rect x="8" y="38" width="15" height="16" fill="#c8dcea" />
    <path d="M8 54h26v14H8z" fill="#6b5b4c" />
    <path d="M33 30l4-2h6l5 3 1 13h-4l-1 2H36l-1-4z" fill="#4b4a4b" />
    <circle cx="39.500" cy="28" r="3" fill="#6d4c3b" />
    <path d="M36 45H80V68H34z" fill="#0c0c0f" />
  </>,
  <>
    <rect x="4" y="21" width="80" height="46" fill="#232323" />
    <rect x="4" y="21" width="80" height="6" fill="#e9e9ea" />
    <path d="M8 22.500H80" stroke="#c99a8a" strokeWidth="1.500" strokeDasharray="3 3" />
    <rect x="26" y="38" width="36" height="2.500" fill="#e8e8e8" />
    <rect x="26" y="43" width="36" height="7" fill="#f2f2f0" />
    <rect x="26" y="53" width="36" height="10" fill="#ececea" />
    <path d="M27 55h12v6H27z" fill="#333" />
    <rect x="81" y="33" width="3" height="4" fill="#3c6ab5" />
    <rect x="81" y="37" width="3" height="4" fill="#48a7e0" />
    <rect x="81" y="41" width="3" height="4" fill="#d24a3a" />
    <g transform="translate(52.500 52.500) scale(0.380)">
      <ChromeLogo />
    </g>
  </>,
  <>
    <rect x="4" y="21" width="80" height="46" fill="#252932" />
    <rect x="4" y="21" width="48" height="2" fill="#777b80" />
    <path d="M7 26h8M7 29h10M7 32h7M7 35h9M7 38h10M7 44h8M7 47h9M7 54h8" stroke="#555b66" strokeWidth="1" />
    <path d="M21 26h12M21 32h16M21 40h14M21 49h22M21 57h26" stroke="#7f4a50" strokeWidth="1" />
    <path d="M21 29h20M21 36h18M21 44h20" stroke="#3f6f7c" strokeWidth="1" />
    <rect x="52" y="26" width="32" height="41" fill="#f4f4f4" />
    <rect x="52" y="26" width="32" height="5" fill="#c9c9c9" />
    <rect x="56" y="31" width="10" height="2.500" fill="#b7d0f2" />
    <path d="M55 41h26M55 50h12M72 50h9M55 57h12" stroke="#8b8b8b" strokeWidth="1.500" />
    <g transform="translate(52.500 52.500) scale(0.380)">
      <AtomLogo id="at2" />
    </g>
  </>,
  <>
    <defs>
      <linearGradient id="tr" x1="0" y1="0" x2="1" y2="0">
        <stop offset="0" stopColor="#b9bcbd" />
        <stop offset="0.250" stopColor="#eceded" />
        <stop offset="0.700" stopColor="#d9dadb" />
        <stop offset="1" stopColor="#aeb1b2" />
      </linearGradient>
    </defs>
    <path d="M18 14L24 6L30 10L34 4L42 9L50 5L56 9L64 8L70 15L66 24H22z" fill="#f3f3f3" />
    <path d="M26 12l5 4M51 8l-3 6M59 12l4 3M34 8l2 5" stroke="#555" strokeWidth="1.500" />
    <path d="M46 14l5-2 3 5-5 3z" fill="#4b9bd6" />
    <path d="M55 17l5-1 1 4-4 1z" fill="#cf6a3d" />
    <path d="M38 16l4 0-1 4-3 0z" fill="#53a66b" />
    <path d="M14 13L20 74Q21 81 44 81Q67 81 68 74L74 13Q70 22 44 22Q18 22 14 13z" fill="url(#tr)" opacity="0.950" />
    <path d="M24 30l2 42M62 30l-2 42M36 26q8 12 20 6M32 50q10 10 22 4" stroke="#f7f7f7" strokeWidth="2" fill="none" opacity="0.700" />
    <ellipse cx="44" cy="14" rx="30" ry="7.500" fill="none" stroke="#dfe1e2" strokeWidth="1.500" />
  </>,
];

function Tile({ children }: { children: React.ReactNode }) {
  return (
    <svg width="88" height="88" viewBox="0 0 88 88" className="shrink-0 drop-shadow-[0_1px_1px_rgba(0,0,0,0.35)]">
      {children}
    </svg>
  );
}

/* Sliver of the rocky desktop wallpaper beside the dock */
function Rock() {
  return (
    <svg width="70" height="106" viewBox="0 0 70 106" className="shrink-0">
      <defs>
        <linearGradient id="rk" x1="0" y1="0" x2="0.300" y2="1">
          <stop offset="0" stopColor="#85857f" />
          <stop offset="0.300" stopColor="#4a4a46" />
          <stop offset="0.550" stopColor="#84837d" />
          <stop offset="1" stopColor="#6b6a64" />
        </linearGradient>
        <filter id="rn" x="0" y="0" width="1" height="1">
          <feTurbulence type="fractalNoise" baseFrequency="0.040 0.070" numOctaves="4" seed="8" />
          <feColorMatrix values="0 0 0 0 0  0 0 0 0 0  0 0 0 0 0  1.800 0 0 0 -0.650" />
        </filter>
      </defs>
      <rect width="70" height="106" fill="url(#rk)" />
      <path d="M70 6V34Q40 34 0 54V42Q34 26 70 6z" fill="#34342f" opacity="0.700" />
      <rect width="70" height="106" filter="url(#rn)" />
    </svg>
  );
}

function Dock() {
  return (
    <div className="flex h-[106px] w-[3220px] shrink-0 rounded-t-[10px] bg-[linear-gradient(90deg,#9b9894_0%,#97939a_7%,#6e7588_11%,#6a7588_18%,#79838b_25%,#7d868b_45%,#7f8384_60%,#7c8182_75%,#6f7b7d_90%,#697577_100%)] px-[6px] pt-[6px]">
      {dockIcons.map((d) => (
        <div key={d.name} className="flex w-[88px] shrink-0 flex-col items-center">
          <Tile>{d.art}</Tile>
          {d.running ? <span className="h-[8px] w-[8px] rounded-full bg-[#0c0f14]" /> : null}
        </div>
      ))}
      <div className="mt-[8px] mr-[18px] ml-[20px] h-[78px] w-[2px] shrink-0 bg-[#4d595b]" />
      {minimized.map((m, i) => (
        <Tile key={i}>{m}</Tile>
      ))}
    </div>
  );
}

function NumbersWindow() {
  return (
    <div className="flex h-[1946px] shrink-0 flex-col overflow-hidden rounded-[10px] bg-white">
      <header className="h-[136px] shrink-0 border-b border-[#a9a9a9] bg-linear-to-b from-[#e8e8e8] to-[#cecece]">
        <div className="flex h-[50px] items-center">
          <div className="mt-[-6px] ml-[16px] flex gap-[16px]">
            <span className="h-[24px] w-[24px] rounded-full border border-[#d6574d] bg-[#ee6a5f]" />
            <span className="h-[24px] w-[24px] rounded-full border border-[#dba345] bg-[#f6be50]" />
            <span className="h-[24px] w-[24px] rounded-full border border-[#51a83f] bg-[#61c654]" />
          </div>
          <div className="mt-[-5px] ml-[1460px] flex items-center">
            <svg width="24" height="31" viewBox="0 0 24 31">
              <rect x="0.500" y="0.500" width="23" height="30" fill="#fff" stroke="#b9b9b9" />
              <rect x="7" y="16" width="2" height="5" fill="#d9483f" />
              <rect x="10" y="13" width="2" height="8" fill="#ef9332" />
              <rect x="13" y="10" width="2" height="11" fill="#55b848" />
              <rect x="16" y="12" width="2" height="9" fill="#3a8cea" />
              <path d="M4 23.500h16" stroke="#cfcfcf" />
            </svg>
            <span className="ml-[12px] w-[164px] text-[26px] tracking-[-0.2px] whitespace-nowrap text-[#161616]">New LinkedIn</span>
            <Chevron color="#a7a7a7" className="ml-[8px]" />
          </div>
        </div>
        <Toolbar />
      </header>

      <div className="flex h-[56px] shrink-0 items-stretch border-b-2 border-[#c6c6c6] bg-[#f5f5f5]">
        <div className="flex w-[94px] items-center justify-center">
          <svg width="24" height="24" viewBox="0 0 24 24">
            <path d="M12 1V23M1 12H23" stroke="#6a6a6a" strokeWidth="2" />
          </svg>
        </div>
        <div className="flex w-[224px] items-center justify-center bg-[#dce8fa] pt-[3px] text-[24px] text-[#4a8fe8]">Sheet 1</div>
      </div>

      <main className="flex grow flex-col bg-white pt-[98px] font-['Liberation_Sans',Arial,sans-serif] text-black">
        <div className="ml-[79px] flex h-[282px] items-start">
          <SheetTable
            title="Users Table"
            columns={[
              "user_id",
              "Email",
              "Password",
              "Education",
              "Education img",
              "country",
              "industry",
              "occupation",
              "company",
              "Company image",
              "First name",
              "Lastname",
            ]}
            firstRow={{
              3: "String",
              4: "string",
              5: "string",
              6: "string",
              7: "String",
              8: "string",
              9: "String",
              10: "string",
              11: "String",
            }}
          />
        </div>
        <div className="ml-[79px] flex h-[282px] items-start">
          <SheetTable title="Posts Table" columns={["post_id", "user_id", "content", "author_id(user_id)", "like"]} />
          <div className="compact group ml-[80px]">
            <SheetTable title="Post-Like" headerColumn={false} columns={["post_like_id", "post_id", "user_id"]} />
          </div>
        </div>
        <div className="ml-[79px] flex h-[281px] items-start">
          <SheetTable title="Comments Table" columns={["comment_id", "post_id", "user_id", "like"]} />
          <SheetTable
            title="Comments-Likes"
            headerColumn={false}
            className="ml-[80px]"
            columns={["comment_like_id", "comment_id", "user_id"]}
          />
          <SheetTable title="Relationship Table (rails auto)" className="ml-[553px]" columns={["follower_id", "followed_id"]} />
        </div>
        <div className="ml-[79px] flex h-[224px] items-start">
          <SheetTable title="Replies Table" columns={["reply_id", "comment_id", "user_id", "Like"]} />
          <div className="compact group ml-[80px]">
            <SheetTable title="Replies-Likes" headerColumn={false} columns={["replies_like_id", "reply_id", "user_id"]} />
          </div>
        </div>
        <div className="ml-[79px] flex h-[205px] items-start">
          <SheetTable
            title="Messages Table"
            columns={["message_id", "sender_id(user)", "receiver_id(user)", "Content", "Status"]}
            firstRow={{ 4: "Read" }}
          />
        </div>
        <div className="mt-auto h-[70px] bg-linear-to-b from-white to-[#e9e9e9] mask-x-from-[97%]" />
      </main>
    </div>
  );
}

export default function App() {
  return (
    <div className="flex h-[2100px] w-[3360px] flex-col overflow-hidden bg-[linear-gradient(90deg,#71716c_0px,#8a8a85_30px,#55554f_60px,#20222a_140px,#15171f_500px,#24282c_1600px,#2a3032_3280px,#3b4748_3360px)] font-[Inter,Roboto,sans-serif]">
      <MenuBar />
      <div className="h-[2px] shrink-0 bg-[linear-gradient(90deg,#000_0%,#000_70%,#25354f_72%,#6f7d90_77%,#8c8c88_82%,#a5a5a3_100%)]" />
      <NumbersWindow />
      <div className="h-[2px] shrink-0" />
      <div className="flex">
        <Rock />
        <Dock />
      </div>
    </div>
  );
}
